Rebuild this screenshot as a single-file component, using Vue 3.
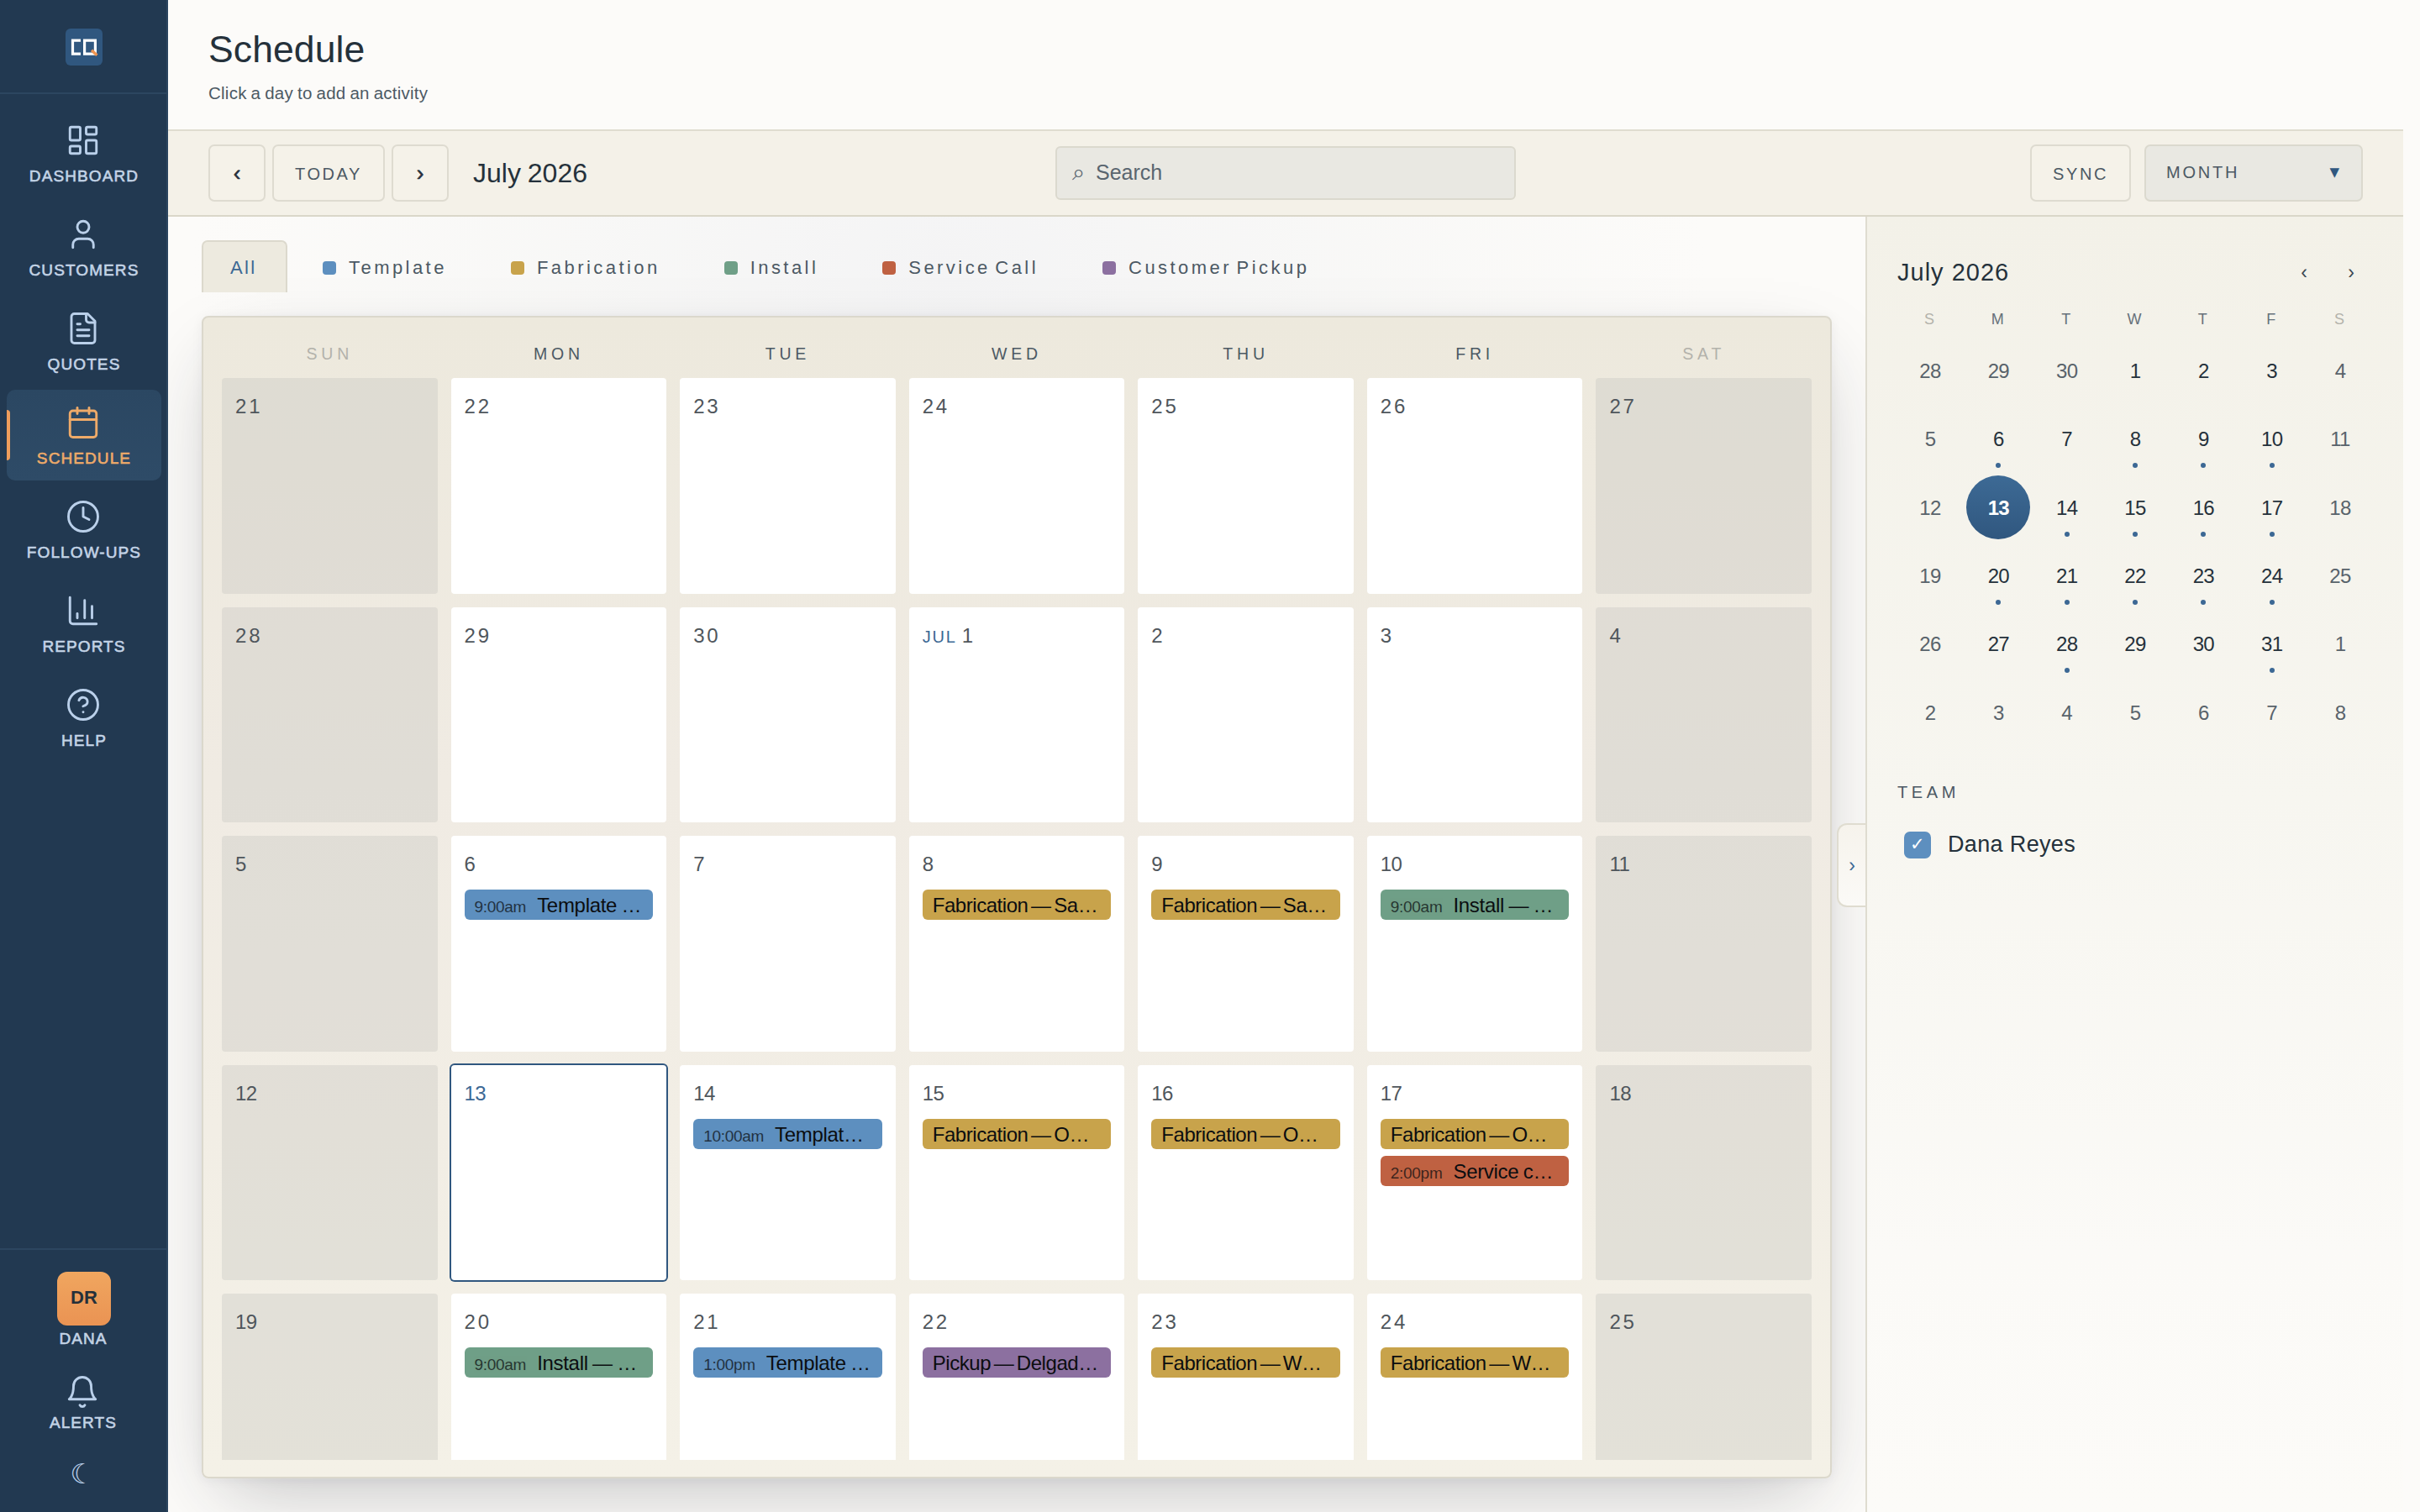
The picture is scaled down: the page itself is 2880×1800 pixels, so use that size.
<script setup>
const nav = [
  { label: 'Dashboard', d: ['M4 3h5a1 1 0 0 1 1 1v7a1 1 0 0 1-1 1H4a1 1 0 0 1-1-1V4a1 1 0 0 1 1-1z', 'M15 3h5a1 1 0 0 1 1 1v3a1 1 0 0 1-1 1h-5a1 1 0 0 1-1-1V4a1 1 0 0 1 1-1z', 'M15 12h5a1 1 0 0 1 1 1v7a1 1 0 0 1-1 1h-5a1 1 0 0 1-1-1v-7a1 1 0 0 1 1-1z', 'M4 16h5a1 1 0 0 1 1 1v3a1 1 0 0 1-1 1H4a1 1 0 0 1-1-1v-3a1 1 0 0 1 1-1z'] },
  { label: 'Customers', d: ['M19 21v-2a4 4 0 0 0-4-4H9a4 4 0 0 0-4 4v2', 'M12 3a4 4 0 1 0 0 8a4 4 0 1 0 0-8z'] },
  { label: 'Quotes', d: ['M15 2H6a2 2 0 0 0-2 2v16a2 2 0 0 0 2 2h12a2 2 0 0 0 2-2V7z', 'M14 2v4a2 2 0 0 0 2 2h4', 'M10 9H8', 'M16 13H8', 'M16 17H8'] },
  { label: 'Schedule', active: true, d: ['M8 2v4', 'M16 2v4', 'M5 4h14a2 2 0 0 1 2 2v14a2 2 0 0 1-2 2H5a2 2 0 0 1-2-2V6a2 2 0 0 1 2-2z', 'M3 10h18'] },
  { label: 'Follow-ups', d: ['M12 2a10 10 0 1 0 0 20a10 10 0 1 0 0-20z', 'M12 6v6l4 2'] },
  { label: 'Reports', d: ['M3 3v16a2 2 0 0 0 2 2h16', 'M18 17V9', 'M13 17V5', 'M8 17v-3'] },
  { label: 'Help', d: ['M12 2a10 10 0 1 0 0 20a10 10 0 1 0 0-20z', 'M9.09 9a3 3 0 0 1 5.83 1c0 2-3 3-3 3', 'M12 17h.01'] },
]
const bell = ['M6 8a6 6 0 0 1 12 0c0 7 3 9 3 9H3s3-2 3-9', 'M10.3 21a1.94 1.94 0 0 0 3.4 0']

const filters = [
  { label: 'Template', type: 'template' },
  { label: 'Fabrication', type: 'fabrication' },
  { label: 'Install', type: 'install' },
  { label: 'Service Call', type: 'service' },
  { label: 'Customer Pickup', type: 'pickup' },
]
const weekdays = ['Sun', 'Mon', 'Tue', 'Wed', 'Thu', 'Fri', 'Sat']

const events = {
  16: [{ type: 'template', time: '9:00am', title: 'Template …' }],
  18: [{ type: 'fabrication', title: 'Fabrication — Sa…' }],
  19: [{ type: 'fabrication', title: 'Fabrication — Sa…' }],
  20: [{ type: 'install', time: '9:00am', title: 'Install — …' }],
  24: [{ type: 'template', time: '10:00am', title: 'Templat…' }],
  25: [{ type: 'fabrication', title: 'Fabrication — O…' }],
  26: [{ type: 'fabrication', title: 'Fabrication — O…' }],
  27: [{ type: 'fabrication', title: 'Fabrication — O…' }, { type: 'service', time: '2:00pm', title: 'Service c…' }],
  30: [{ type: 'install', time: '9:00am', title: 'Install — …' }],
  31: [{ type: 'template', time: '1:00pm', title: 'Template …' }],
  32: [{ type: 'pickup', title: 'Pickup — Delgad…' }],
  33: [{ type: 'fabrication', title: 'Fabrication — W…' }],
  34: [{ type: 'fabrication', title: 'Fabrication — W…' }],
}
// offset 0 is Sunday, June 21; July 1 is offset 10
const days = Array.from({ length: 35 }, (_, i) => {
  const key = i < 10 ? null : i + 1
  const num = i < 10 ? 21 + i : i - 9
  return {
    num,
    month: i === 10 ? 'Jul' : '',
    weekend: i % 7 === 0 || i % 7 === 6,
    today: i === 22,
    narrow: num >= 10 && num < 20,
    events: (key && events[key]) || [],
  }
})

const dotted = [6, 8, 9, 10, 14, 15, 16, 17, 20, 21, 22, 23, 24, 28, 31]
const mini = Array.from({ length: 42 }, (_, i) => {
  const n = i - 2
  const inMonth = n >= 1 && n <= 31
  return {
    num: n < 1 ? n + 30 : n > 31 ? n - 31 : n,
    muted: !inMonth || i % 7 === 0 || i % 7 === 6,
    today: n === 13,
    dot: inMonth && dotted.includes(n),
  }
})
</script>

<template>
  <div class="app">
    <aside class="sidebar">
      <div class="brand">
        <svg class="logo" viewBox="0 0 44 44">
          <path d="M18 14.2H8.5V30.2H18" fill="none" stroke="#fff" stroke-width="3.2" />
          <path d="M22.6 14.2H35.4V30.2H22.6Z" fill="none" stroke="#fff" stroke-width="3.2" />
          <path d="M31 25.8L37.4 31.8" stroke="#ee9450" stroke-width="3.4" />
        </svg>
      </div>
      <nav class="nav">
        <a v-for="n in nav" :key="n.label" class="nav-item" :class="{ active: n.active }">
          <svg class="icon" viewBox="0 0 24 24"><path v-for="p in n.d" :key="p" :d="p" /></svg>
          <span class="nav-label">{{ n.label }}</span>
        </a>
      </nav>
      <div class="side-foot">
        <div class="avatar">DR</div>
        <span class="nav-label dana">Dana</span>
        <svg class="icon bell" viewBox="0 0 24 24"><path v-for="p in bell" :key="p" :d="p" /></svg>
        <span class="nav-label alerts">Alerts</span>
        <span class="moon">☾</span>
      </div>
    </aside>

    <div class="page">
      <header class="head">
        <h1>Schedule</h1>
        <p>Click a day to add an activity</p>
      </header>

      <div class="toolbar">
        <div class="tb-left">
          <button class="btn sq">‹</button>
          <button class="btn today-btn">Today</button>
          <button class="btn sq">›</button>
          <span class="range">July 2026</span>
        </div>
        <div class="search"><span class="glass">⌕</span><span>Search</span></div>
        <div class="tb-right">
          <button class="btn sync">Sync</button>
          <div class="select"><span>Month</span><span class="caret">▼</span></div>
        </div>
      </div>

      <div class="body">
        <main class="main">
          <div class="tabs">
            <div class="tab on">All</div>
            <div v-for="f in filters" :key="f.label" class="tab">
              <i class="swatch" :class="f.type"></i><span>{{ f.label }}</span>
            </div>
          </div>
          <section class="card">
            <div class="week">
              <span v-for="(w, i) in weekdays" :key="w" :class="{ faint: i === 0 || i === 6 }">{{ w }}</span>
            </div>
            <div class="grid">
              <div v-for="(d, i) in days" :key="i" class="cell" :class="{ weekend: d.weekend, today: d.today }">
                <div class="date" :class="{ narrow: d.narrow }">
                  <span v-if="d.month" class="mon">{{ d.month }}</span>{{ d.num }}
                </div>
                <div v-for="(e, j) in d.events" :key="j" class="event" :class="[e.type, { allday: !e.time }]">
                  <span v-if="e.time" class="time">{{ e.time }}</span>
                  <span class="title">{{ e.title }}</span>
                </div>
              </div>
            </div>
          </section>
          <button class="collapse">›</button>
        </main>

        <aside class="panel">
          <div class="mini-head">
            <span class="mini-title">July 2026</span>
            <span class="mini-nav"><i>‹</i><i>›</i></span>
          </div>
          <div class="mini-week">
            <span v-for="(w, i) in weekdays" :key="w" :class="{ faint: i === 0 || i === 6 }">{{ w[0] }}</span>
          </div>
          <div class="mini-grid">
            <div v-for="(m, i) in mini" :key="i" class="mini-day" :class="{ muted: m.muted, now: m.today }">
              {{ m.num }}<i v-if="m.dot" class="dot"></i>
            </div>
          </div>
          <div class="team">Team</div>
          <div class="member"><span class="check">✓</span><span>Dana Reyes</span></div>
        </aside>
      </div>
    </div>
  </div>
</template>

<style>
body {
  background: #fcfbf8;
  overflow: hidden;
}
</style>

<style scoped>
.app,
.app * {
  box-sizing: border-box;
}
.app {
  display: flex;
  width: 2880px;
  height: 1800px;
  overflow: hidden;
  background: #fcfbf9;
  color: #25313b;
  font-family: "Liberation Sans", Arial, sans-serif;
}
button {
  font-family: inherit;
  padding: 0;
  margin: 0;
}

/* sidebar */
.sidebar {
  width: 200px;
  flex: none;
  display: flex;
  flex-direction: column;
  background: #223951;
  border-right: 2px solid #2b455f;
}
.brand {
  height: 112px;
  flex: none;
  display: flex;
  justify-content: center;
  border-bottom: 2px solid #2c4660;
}
.logo {
  width: 44px;
  height: 44px;
  margin: 34px 0 0 2px;
  border-radius: 6px;
  background: #30577f;
}
.nav {
  display: flex;
  flex-direction: column;
  gap: 4px;
  padding: 16px 6px 0 8px;
}
.nav-item {
  position: relative;
  height: 108px;
  display: flex;
  flex-direction: column;
  align-items: center;
  padding-top: 18px;
  border-radius: 10px;
  color: #bad0ea;
}
.nav-item.active {
  background: linear-gradient(#2b4762, #2e4b67);
  color: #eeaa69;
}
.nav-item.active::before {
  content: "";
  position: absolute;
  left: 0;
  top: 24px;
  width: 4px;
  height: 60px;
  border-radius: 0 4px 4px 0;
  background: #ee9d5c;
}
.icon {
  width: 42px;
  height: 42px;
  flex: none;
  fill: none;
  stroke: currentColor;
  stroke-width: 1.65;
  stroke-linecap: round;
  stroke-linejoin: round;
}
.nav-item .icon {
  margin-right: 2px;
}
.nav-label {
  margin-top: 11px;
  font-size: 19px;
  line-height: 22px;
  letter-spacing: 1.1px;
  text-transform: uppercase;
  color: #c3d3e6;
  -webkit-text-stroke: 0.6px currentColor;
}
.active .nav-label {
  color: #eeaa69;
}
.side-foot {
  margin-top: auto;
  height: 314px;
  display: flex;
  flex-direction: column;
  align-items: center;
  border-top: 2px solid #2c4660;
  color: #bad0ea;
}
.avatar {
  width: 64px;
  height: 64px;
  flex: none;
  margin: 26px 0 0 2px;
  border-radius: 12px;
  background: linear-gradient(#f0a65f, #ea9353);
  color: #25303a;
  font-size: 22px;
  font-weight: 700;
  line-height: 62px;
  text-align: center;
}
.dana {
  margin-top: 5px;
}
.bell {
  margin: 31px 2px 0 0;
}
.alerts {
  margin-top: 5px;
}
.moon {
  margin: 31px 2px 0 0;
  font-family: "DejaVu Sans", sans-serif;
  font-size: 33px;
  line-height: 38px;
}

/* header */
.page {
  flex: 1;
  min-width: 0;
  display: flex;
  flex-direction: column;
  padding-right: 20px;
}
.head {
  height: 154px;
  flex: none;
  padding: 32px 48px 0;
}
h1 {
  margin: 0;
  font-size: 44.5px;
  font-weight: 400;
  line-height: 54px;
  letter-spacing: 0.1px;
}
p {
  margin: 12px 0 0;
  font-size: 20.5px;
  line-height: 26px;
  letter-spacing: 0.25px;
  word-spacing: -1px;
  color: #4c5964;
}
.toolbar {
  height: 104px;
  flex: none;
  display: flex;
  align-items: center;
  justify-content: space-between;
  position: relative;
  padding: 0 48px;
  background: #f4f1e8;
  border-top: 2px solid #dfdcd0;
  border-bottom: 2px solid #dad7c9;
}
.tb-left,
.tb-right {
  display: flex;
  align-items: center;
}
.tb-left {
  gap: 8px;
  width: 564px;
}
.tb-right {
  gap: 16px;
  width: 564px;
  justify-content: flex-end;
}
.btn {
  height: 68px;
  background: #f5f2e9;
  border: 2px solid #dedbd0;
  border-radius: 7px;
  color: #4c5964;
  font-size: 20px;
  letter-spacing: 2.6px;
  text-transform: uppercase;
  padding-top: 2px;
}
.btn.sq {
  width: 68px;
  color: #25313b;
  font-size: 26px;
  letter-spacing: 0;
  padding: 0;
  -webkit-text-stroke: 0.6px currentColor;
}
.today-btn {
  width: 134px;
}
.sync {
  width: 120px;
}
.range {
  margin-left: 21px;
  font-size: 32px;
  line-height: 40px;
  word-spacing: -1px;
  padding-bottom: 1px;
}
.search {
  width: 548px;
  height: 64px;
  display: flex;
  align-items: center;
  padding: 0 0 2px 18px;
  background: #e9e8e2;
  border: 2px solid #dbd9ce;
  border-radius: 6px;
  color: #59656f;
  font-size: 25px;
}
.glass {
  width: 28px;
  font-family: "DejaVu Sans", sans-serif;
  font-size: 27px;
}
.select {
  width: 260px;
  height: 68px;
  display: flex;
  align-items: center;
  justify-content: space-between;
  padding: 0 26px 2px 24px;
  background: #e9e8e2;
  border: 2px solid #dbd9ce;
  border-radius: 7px;
  color: #4c5964;
  font-size: 20px;
  letter-spacing: 2.8px;
  text-transform: uppercase;
}
.caret {
  font-family: "DejaVu Sans", sans-serif;
  font-size: 15px;
  letter-spacing: 0;
  color: #30577f;
}

/* calendar */
.body {
  flex: 1;
  min-height: 0;
  display: flex;
}
.main {
  position: relative;
  width: 2020px;
  flex: none;
  padding: 28px 40px 40px;
  display: flex;
  flex-direction: column;
  overflow: hidden;
  background: radial-gradient(ellipse 900px 560px at 46% 4%, #f4f4f5, rgba(247, 247, 246, 0.7) 55%, rgba(252, 251, 249, 0));
}
.tabs {
  display: flex;
  gap: 8px;
  height: 62px;
  flex: none;
  margin-bottom: 28px;
  position: relative;
  z-index: 1;
}
.tab {
  display: flex;
  align-items: center;
  gap: 15px;
  padding: 2px 32px 0;
  border: 2px solid transparent;
  border-bottom: 0;
  border-radius: 7px 7px 0 0;
  font-size: 22px;
  letter-spacing: 3.45px;
  word-spacing: -4px;
  color: #4c5964;
}
.tab.on {
  width: 102px;
  background: #edeadf;
  border-color: #dcd9cd;
  color: #3c6894;
  letter-spacing: 2.4px;
}
.swatch {
  width: 16px;
  height: 16px;
  border-radius: 4px;
}
.template {
  background: #5d8fbf;
}
.fabrication {
  background: #c8a34b;
}
.install {
  background: #6f9f87;
}
.service {
  background: #bf6142;
}
.pickup {
  background: #8c70a0;
}
.card {
  height: 1384px;
  flex: none;
  display: flex;
  flex-direction: column;
  padding: 22px;
  border: 2px solid #dbd8cc;
  border-radius: 8px;
  background: linear-gradient(#ede9dd, #f0ebe3 40%, #f4f1e7);
  box-shadow: 0 2px 14px rgba(30, 40, 60, 0.05), 0 34px 90px -24px rgba(30, 34, 44, 0.27);
}
.week {
  height: 50px;
  flex: none;
  display: grid;
  grid-template-columns: repeat(7, 1fr);
  gap: 16px;
  font-size: 19.5px;
  line-height: 42px;
  letter-spacing: 4.8px;
  text-align: center;
  text-transform: uppercase;
  color: #4c5964;
}
.faint {
  color: #b3b2ab;
}
.grid {
  flex: 1;
  min-height: 0;
  overflow: hidden;
  display: grid;
  grid-template-columns: repeat(7, 1fr);
  grid-auto-rows: 256.5px;
  gap: 16px;
  margin: -2px;
  padding: 2px;
}
.cell {
  min-width: 0;
  background: #fff;
  border-radius: 4px;
  padding: 16px 16px 0;
}
.cell.weekend {
  background: rgba(196, 196, 190, 0.36);
}
.cell.today {
  box-shadow: 0 0 0 2px #30577f;
}
.today .date {
  color: #3c6894;
}
.date {
  height: 36px;
  margin-bottom: 12px;
  font-size: 24px;
  line-height: 36px;
  letter-spacing: 2.8px;
  color: #4f565c;
}
.date.narrow {
  letter-spacing: -0.6px;
}
.mon {
  margin-right: 6px;
  font-size: 20px;
  letter-spacing: 1.8px;
  text-transform: uppercase;
  color: #3c6894;
}
.event {
  height: 36px;
  margin-bottom: 8px;
  padding: 0 12px;
  border-radius: 6px;
  display: flex;
  align-items: baseline;
  white-space: nowrap;
  overflow: hidden;
  color: #0b0d10;
  font-size: 24px;
  line-height: 37px;
  letter-spacing: -0.3px;
  word-spacing: -1px;
}
.event.allday {
  letter-spacing: -0.45px;
  word-spacing: -2.6px;
}
.time {
  margin-right: 13px;
  font-size: 19px;
  letter-spacing: -0.3px;
  opacity: 0.72;
}
.collapse {
  position: absolute;
  right: 0;
  top: 722px;
  width: 34px;
  height: 100px;
  border: 2px solid #dfdcd0;
  border-right: 0;
  border-radius: 12px 0 0 12px;
  background: linear-gradient(#f6f3ec, #fbfaf7);
  color: #3c6894;
  font-size: 23px;
}

/* side panel */
.panel {
  flex: 1;
  padding: 0 36px;
  border-left: 2px solid #dfdcd0;
  background: linear-gradient(#f3f1e8, #f7f6f0 45%, #fbfaf7 80%, #fcfbf8);
}
.mini-head {
  height: 48px;
  margin-top: 42px;
  display: flex;
  justify-content: space-between;
  align-items: center;
}
.mini-title {
  font-size: 29px;
  letter-spacing: 1px;
}
.mini-nav {
  display: flex;
  margin-right: -2px;
}
.mini-nav i {
  width: 56px;
  font-style: normal;
  font-size: 23px;
  text-align: center;
  color: #3c4853;
}
.mini-week,
.mini-grid {
  width: 564px;
  display: grid;
  grid-template-columns: repeat(7, 76px);
  gap: 5.33px;
}
.mini-grid {
  margin-left: 1px;
}
.mini-week {
  height: 55px;
  font-size: 18px;
  line-height: 64px;
  text-align: center;
  color: #67717a;
}
.mini-week .faint {
  color: #b3b2ab;
}
.mini-day {
  position: relative;
  height: 76px;
  font-size: 24px;
  line-height: 77px;
  letter-spacing: -0.7px;
  text-align: center;
}
.mini-day.muted {
  color: #59636b;
}
.mini-day.now {
  border-radius: 50%;
  background: linear-gradient(#3d6a95, #30577f);
  color: #fff;
  font-weight: 700;
}
.dot {
  position: absolute;
  left: 35px;
  bottom: 3px;
  width: 6px;
  height: 6px;
  border-radius: 50%;
  background: #3c6894;
}
.team {
  margin-top: 43px;
  font-size: 20px;
  line-height: 28px;
  letter-spacing: 4.6px;
  text-transform: uppercase;
  color: #4c5964;
}
.member {
  margin: 31px 0 0 8px;
  display: flex;
  align-items: center;
  gap: 20px;
  height: 36px;
  font-size: 27px;
  letter-spacing: 0.35px;
}
.check {
  width: 32px;
  height: 32px;
  border-radius: 7px;
  background: #5d8fbf;
  color: #fff;
  font-family: "DejaVu Sans", sans-serif;
  font-size: 21px;
  line-height: 30px;
  text-align: center;
}
</style>
